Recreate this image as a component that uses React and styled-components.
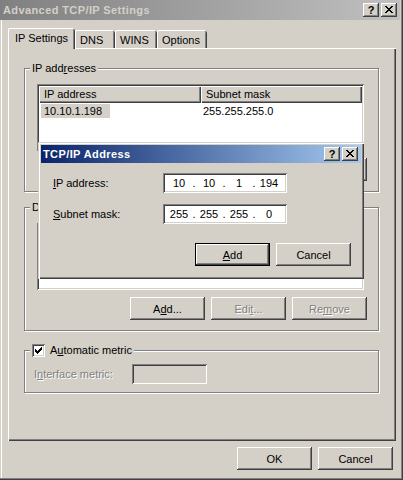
import React from 'react';
import styled, { createGlobalStyle, css } from 'styled-components';

const GlobalStyle = createGlobalStyle`
  html, body {
    margin: 0;
    padding: 0;
    background: #d4d0c8;
  }
  body {
    font-family: "Liberation Sans", Arial, sans-serif;
    font-size: 11px;
    color: #000;
  }
  * {
    box-sizing: border-box;
  }
`;

const raised = css`
  box-shadow: inset -1px -1px #404040, inset 1px 1px #fff, inset -2px -2px #808080, inset 2px 2px #d4d0c8;
`;

const sunken = css`
  box-shadow: inset 1px 1px #808080, inset -1px -1px #fff, inset 2px 2px #404040, inset -2px -2px #d4d0c8;
`;

const disabledText = css`
  color: #808080;
  text-shadow: 1px 1px 0 #fff;
`;

const Window = styled.div`
  position: relative;
  width: 403px;
  height: 480px;
  background: #d4d0c8;
  padding: 0 3px 3px 0;
  box-shadow: inset -1px -1px #404040, inset -2px -2px #808080, inset 1px 0 #d4d0c8, inset 2px 0 #fff;
  display: flex;
  flex-direction: column;
`;

const TitleBar = styled.div`
  height: 20px;
  display: flex;
  align-items: center;
  justify-content: space-between;
  padding: 0 3px 0 3px;
  background: ${(p) => (p.$active
    ? 'linear-gradient(to right, #0a246a, #a6caf0)'
    : 'linear-gradient(to right, #808080, #c0c0c0)')};
`;

const CaptionText = styled.span`
  font-weight: bold;
  letter-spacing: 0.4px;
  color: ${(p) => (p.$active ? '#fff' : '#d4d0c8')};
  white-space: nowrap;
`;

const CaptionButtons = styled.div`
  display: flex;
  gap: 2px;
`;

const CaptionButton = styled.div`
  width: 16px;
  height: 14px;
  background: #d4d0c8;
  ${raised}
  display: flex;
  align-items: center;
  justify-content: center;
  font-weight: bold;
  font-size: 11px;
  line-height: 14px;
  padding-bottom: 1px;
`;

const Body = styled.div`
  padding: 8px 4px 0 8px;
`;

const TabRow = styled.div`
  height: 20px;
  display: flex;
  align-items: flex-end;
`;

const Tab = styled.div`
  position: relative;
  z-index: ${(p) => (p.$active ? 1 : 0)};
  width: ${(p) => p.$w}px;
  height: ${(p) => (p.$active ? 21 : 18)}px;
  margin-bottom: ${(p) => (p.$active ? -1 : 0)}px;
  padding: 4px 0 0 ${(p) => (p.$active ? 7 : 5)}px;
  line-height: 13px;
  background: #d4d0c8;
  border-radius: 2px 2px 0 0;
  box-shadow: inset 1px 0 #fff, inset 0 1px #fff, inset -1px 0 #404040, inset -2px 0 #808080;
  white-space: nowrap;
`;

const Panel = styled.div`
  height: 393px;
  background: #d4d0c8;
  box-shadow: inset 1px 1px #fff, inset -1px -1px #404040, inset -2px -2px #808080;
  padding: 20px 17px 0 16px;
`;

const Group = styled.div`
  position: relative;
  height: ${(p) => p.$h}px;
  margin-top: ${(p) => p.$mt || 0}px;
  border: 1px solid #808080;
  box-shadow: inset 1px 1px #fff, 1px 1px #fff;
  padding: ${(p) => p.$pad};
`;

const Legend = styled.div`
  position: absolute;
  top: -8px;
  left: 5px;
  height: 15px;
  padding: 0 2px;
  line-height: 15px;
  background: #d4d0c8;
  white-space: nowrap;
`;

const CheckLegend = styled.div`
  display: flex;
  align-items: center;
  height: 15px;
  gap: 5px;
`;

const ListView = styled.div`
  height: 67px;
  margin-right: 3px;
  background: #fff;
  ${sunken}
  padding: 2px;
  overflow: hidden;
`;

const HeaderRow = styled.div`
  display: flex;
  height: 17px;
`;

const HeaderCell = styled.div`
  flex: ${(p) => (p.$w ? `0 0 ${p.$w}px` : '1')};
  padding-left: 5px;
  line-height: 16px;
  background: #d4d0c8;
  box-shadow: inset 1px 1px #fff, inset -1px -1px #404040, inset -2px -2px #808080;
`;

const Row = styled.div`
  display: flex;
  height: 14px;
  line-height: 14px;
  margin-top: 1px;
`;

const Cell = styled.div`
  flex: ${(p) => (p.$w ? `0 0 ${p.$w}px` : '1')};
  padding-left: ${(p) => p.$pl || 0}px;
`;

const Selected = styled.span`
  display: inline-block;
  margin-left: 2px;
  padding: 0 8px 0 3px;
  background: #d4d0c8;
`;

const ButtonRow = styled.div`
  display: flex;
  justify-content: flex-end;
  gap: 6px;
  margin-top: ${(p) => p.$mt || 0}px;
`;

const Button = styled.div`
  width: 75px;
  height: 23px;
  display: flex;
  align-items: center;
  justify-content: center;
  background: #d4d0c8;
  ${raised}
  ${(p) => p.$default && css`
    border: 1px solid #000;
  `}
  ${(p) => p.$disabled && disabledText}
`;

const U = styled.span`
  text-decoration: underline;
`;

const CheckBox = styled.div`
  width: 13px;
  height: 13px;
  background: #fff;
  ${sunken}
  display: flex;
  align-items: center;
  justify-content: center;
`;

const MetricRow = styled.div`
  display: flex;
  align-items: center;
`;

const DisabledLabel = styled.span`
  width: 98px;
  ${disabledText}
`;

const DisabledField = styled.div`
  width: 75px;
  height: 20px;
  background: #d4d0c8;
  ${sunken}
`;

const Footer = styled.div`
  display: flex;
  justify-content: flex-end;
  gap: 6px;
  margin-top: 6px;
  padding-right: 3px;
`;

const Dialog = styled.div`
  position: absolute;
  left: 38px;
  top: 142px;
  width: 326px;
  height: 137px;
  background: #d4d0c8;
  box-shadow: inset 1px 1px #d4d0c8, inset 2px 2px #fff, inset -1px -1px #404040, inset -2px -2px #808080;
  padding: 3px;
  display: flex;
  flex-direction: column;
`;

const DialogCaption = styled(TitleBar)`
  height: 18px;
  padding: 0 3px 0 2px;
`;

const DialogBody = styled.div`
  padding: 10px 10px 0 12px;
  display: flex;
  flex-direction: column;
  gap: 11px;
`;

const FieldRow = styled.div`
  display: flex;
  align-items: center;
  height: 20px;
`;

const FieldLabel = styled.span`
  width: 110px;
`;

const IPField = styled.div`
  width: 124px;
  height: 20px;
  background: #fff;
  ${sunken}
  display: flex;
  align-items: center;
  padding-left: 3px;
`;

const Octet = styled.span`
  width: 26px;
  text-align: center;
`;

const Dot = styled.span`
  width: 4px;
  text-align: center;
`;

const CLOSE = [
  'XX....XX',
  '.XX..XX.',
  '..XXXX..',
  '...XX...',
  '..XXXX..',
  '.XX..XX.',
  'XX....XX',
];

const CHECK = [
  '......X',
  '.....XX',
  'X...XXX',
  'XX.XXX.',
  'XXXXX..',
  '.XXX...',
  '..X....',
];

const PixelGlyph = ({ rows, color = '#000' }) => (
  <svg width={rows[0].length} height={rows.length} shapeRendering="crispEdges">
    {rows.flatMap((r, y) => [...r].map((c, x) => (c === 'X'
      ? <rect key={`${x}-${y}`} x={x} y={y} width="1" height="1" fill={color} />
      : null)))}
  </svg>
);

const Caption = ({ title, active, as }) => {
  const Bar = as || TitleBar;
  return (
    <Bar $active={active}>
      <CaptionText $active={active}>{title}</CaptionText>
      <CaptionButtons>
        <CaptionButton>?</CaptionButton>
        <CaptionButton><PixelGlyph rows={CLOSE} /></CaptionButton>
      </CaptionButtons>
    </Bar>
  );
};

const IPAddress = ({ value }) => (
  <IPField>
    {value.map((o, i) => (
      <React.Fragment key={i}>
        {i > 0 && <Dot>.</Dot>}
        <Octet>{o}</Octet>
      </React.Fragment>
    ))}
  </IPField>
);

const ListButtons = () => (
  <ButtonRow $mt={7}>
    <Button>A<U>d</U>d...</Button>
    <Button $disabled>Edi<U>t</U>...</Button>
    <Button $disabled>Re<U>m</U>ove</Button>
  </ButtonRow>
);

const App = () => (
  <>
    <GlobalStyle />
    <Window>
      <Caption title="Advanced TCP/IP Settings" active={false} />
      <Body>
        <TabRow>
          <Tab $active $w={67}>IP Settings</Tab>
          <Tab $w={40}>DNS</Tab>
          <Tab $w={42}>WINS</Tab>
          <Tab $w={50}>Options</Tab>
        </TabRow>
        <Panel>
          <Group $h={124} $pad="15px 11px 10px 12px">
            <Legend>IP add<U>r</U>esses</Legend>
            <ListView>
              <HeaderRow>
                <HeaderCell $w={162}>IP address</HeaderCell>
                <HeaderCell>Subnet mask</HeaderCell>
              </HeaderRow>
              <Row>
                <Cell $w={162}><Selected>10.10.1.198</Selected></Cell>
                <Cell $pl={2}>255.255.255.0</Cell>
              </Row>
            </ListView>
            <ListButtons />
          </Group>
          <Group $h={124} $mt={15} $pad="15px 11px 10px 12px">
            <Legend>D<U>e</U>fault gateways:</Legend>
            <ListView>
              <HeaderRow>
                <HeaderCell $w={162}>Gateway</HeaderCell>
                <HeaderCell>Metric</HeaderCell>
              </HeaderRow>
            </ListView>
            <ListButtons />
          </Group>
          <Group $h={43} $mt={19} $pad="13px 0 0 9px">
            <Legend>
              <CheckLegend>
                <CheckBox><PixelGlyph rows={CHECK} /></CheckBox>
                <span>A<U>u</U>tomatic metric</span>
              </CheckLegend>
            </Legend>
            <MetricRow>
              <DisabledLabel>I<U>n</U>terface metric:</DisabledLabel>
              <DisabledField />
            </MetricRow>
          </Group>
        </Panel>
        <Footer>
          <Button>OK</Button>
          <Button>Cancel</Button>
        </Footer>
      </Body>

      <Dialog>
        <Caption title="TCP/IP Address" active as={DialogCaption} />
        <DialogBody>
          <FieldRow>
            <FieldLabel><U>I</U>P address:</FieldLabel>
            <IPAddress value={['10', '10', '1', '194']} />
          </FieldRow>
          <FieldRow>
            <FieldLabel><U>S</U>ubnet mask:</FieldLabel>
            <IPAddress value={['255', '255', '255', '0']} />
          </FieldRow>
          <ButtonRow $mt={8}>
            <Button $default><U>A</U>dd</Button>
            <Button>Cancel</Button>
          </ButtonRow>
        </DialogBody>
      </Dialog>
    </Window>
  </>
);

export default App;
